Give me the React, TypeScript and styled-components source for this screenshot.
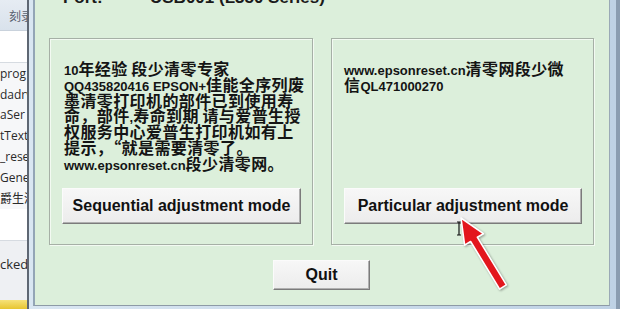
import React from "react";
import styled, { createGlobalStyle } from "styled-components";

const Global = createGlobalStyle`
  html, body { margin: 0; padding: 0; overflow: hidden; background: #ffffff; }
  #root { width: 620px; height: 309px; }
`;

const Screen = styled.div`
  position: relative;
  display: flex;
  width: 620px;
  height: 309px;
  overflow: hidden;
  font-family: "Liberation Sans", Arial, sans-serif;
`;

/* ---------- background explorer pane ---------- */
const Explorer = styled.div`
  width: 27px;
  flex: none;
  display: flex;
  flex-direction: column;
  background: #f7f8fa;
  overflow: hidden;
  font-family: "Open Sans", "Noto Sans CJK SC", sans-serif;
  font-size: 12px;
  color: #2a2a2a;
`;

const ExplorerHeader = styled.div`
  height: 30px;
  flex: none;
  display: flex;
  align-items: center;
  padding-left: 9px;
  background: linear-gradient(#e6ecf3, #d9e2ec);
  border-bottom: 1px solid #c9d2dc;
  color: #5a6270;
  white-space: nowrap;
  font-family: "Noto Sans CJK SC", sans-serif;
`;

const ExplorerGap = styled.div<{ $h: number }>`
  height: ${(p) => p.$h}px;
  flex: none;
  background: #ffffff;
`;

const ExplorerSep = styled.div`
  height: 1px;
  flex: none;
  background: #d6dbe1;
`;

const ExplorerRow = styled.div`
  height: 20.8px;
  flex: none;
  display: flex;
  align-items: center;
  white-space: nowrap;
  background: #f6f7f9;
`;

const ExplorerFooter = styled.div`
  flex: 1;
  display: flex;
  flex-direction: column;
  background: #eef0f3;
`;

const FooterRow = styled.div`
  height: 44px;
  display: flex;
  align-items: center;
  padding-top: 1px;
  white-space: nowrap;
  font-size: 13px;
`;

const YellowBar = styled.div`
  margin-top: auto;
  height: 9px;
  background: linear-gradient(#f6e27a, #e7c531);
`;

/* ---------- window frame ---------- */
const Window = styled.div`
  flex: 1;
  display: flex;
  flex-direction: column;
  border-left: 2px solid #5e6773;
  border-right: 4px solid #8b9db1;
  padding: 0 6px 3px 4px;
  background: linear-gradient(90deg, #d9e6f2, #bfd2e5);
`;

const Dialog = styled.div`
  flex: 1;
  display: flex;
  flex-direction: column;
  background: #dcefdb;
  border-left: 2px solid #93a5b6;
  border-right: 1px solid #9aa9b6;
  border-bottom: 1px solid #8d9aa6;
  padding: 0 15px 0 14px;
  overflow: hidden;
`;

const PortRow = styled.div`
  margin-top: -11px;
  height: 18px;
  display: flex;
  padding-left: 14px;
  font-size: 17px;
  line-height: 18px;
  font-weight: bold;
  color: #1a1a1a;
  white-space: nowrap;
`;

const PortLabel = styled.span`
  width: 87px;
  flex: none;
`;

const Groups = styled.div`
  margin-top: 31px;
  display: grid;
  grid-template-columns: 264px 263px;
  column-gap: 18px;
  height: 207px;
`;

const GroupBox = styled.div`
  display: flex;
  flex-direction: column;
  border: 1px solid #a6b0a6;
  box-shadow: inset 1px 1px 0 #f3faf2, 1px 1px 0 #f3faf2;
  padding: 22px 11px 20px 12px;
`;

const Notice = styled.div<{ $indent: number }>`
  padding-left: ${(p) => p.$indent}px;
  font-weight: bold;
  color: #141414;
  line-height: 15.8px;
`;

const Line = styled.div`
  white-space: nowrap;
  height: 15.8px;
`;

const Latin = styled.span`
  display: inline-block;
  white-space: pre;
  line-height: 15.8px;
  font-family: "Liberation Sans", Arial, sans-serif;
  font-size: 13px;
`;

const Cjk = styled.span`
  display: inline-block;
  white-space: pre;
  line-height: 15.8px;
  font-family: "Noto Sans CJK SC", sans-serif;
  font-size: 16px;
  letter-spacing: 0.4px;
`;

const ModeButton = styled.button`
  margin-top: auto;
  height: 36px;
  width: 100%;
  background: linear-gradient(#f7f7f7, #ececec);
  border: 1px solid;
  border-color: #fbfbfb #7b7b7b #7b7b7b #fbfbfb;
  box-shadow: inset -1px -1px 0 #b0b0b0;
  font-family: "Liberation Sans", Arial, sans-serif;
  font-weight: bold;
  font-size: 16px;
  color: #111;
  padding: 0;
`;

const QuitRow = styled.div`
  margin-top: 15px;
  display: flex;
  justify-content: center;
`;

const QuitButton = styled(ModeButton)`
  margin-top: 0;
  width: 97px;
  height: 30px;
`;

const Overlay = styled.svg`
  position: absolute;
  left: 0;
  top: 0;
  width: 620px;
  height: 309px;
  pointer-events: none;
`;

const CJK_RE = /([\u3000-\u303f\u4e00-\u9fff\uff00-\uffef\u201c\u201d]+)/;

function Mixed({ text }: { text: string }) {
  const parts = text.split(CJK_RE).filter((s) => s.length > 0);
  return (
    <Line>
      {parts.map((p, i) =>
        CJK_RE.test(p) ? <Cjk key={i}>{p}</Cjk> : <Latin key={i}>{p}</Latin>
      )}
    </Line>
  );
}

const leftLines = [
  "10年经验 段少清零专家",
  "QQ435820416 EPSON+佳能全序列废",
  "墨清零打印机的部件已到使用寿",
  "命，部件,寿命到期 请与爱普生授",
  "权服务中心爱普生打印机如有上",
  "提示，“就是需要清零了。",
  "www.epsonreset.cn段少清零网。",
];

const rightLines = ["www.epsonreset.cn清零网段少微", "信QL471000270"];

const explorerRows = ["prog", "dadrv", "aSer", "tText", "_rese", "Gene", "爵生清"];

export default function App() {
  return (
    <>
      <Global />
      <Screen>
        <Explorer>
          <ExplorerHeader>刻录</ExplorerHeader>
          <ExplorerGap $h={31} />
          <ExplorerSep />
          {explorerRows.map((r) => (
            <ExplorerRow key={r}>{r}</ExplorerRow>
          ))}
          <ExplorerGap $h={31} />
          <ExplorerSep />
          <ExplorerFooter>
            <FooterRow>cked</FooterRow>
            <YellowBar />
          </ExplorerFooter>
        </Explorer>
        <Window>
          <Dialog>
            <PortRow>
              <PortLabel>Port:</PortLabel>
              <span>USB001 (L350 Series)</span>
            </PortRow>
            <Groups>
              <GroupBox>
                <Notice $indent={2}>
                  {leftLines.map((l) => (
                    <Mixed key={l} text={l} />
                  ))}
                </Notice>
                <ModeButton>Sequential adjustment mode</ModeButton>
              </GroupBox>
              <GroupBox>
                <Notice $indent={0}>
                  {rightLines.map((l) => (
                    <Mixed key={l} text={l} />
                  ))}
                </Notice>
                <ModeButton>Particular adjustment mode</ModeButton>
              </GroupBox>
            </Groups>
            <QuitRow>
              <QuitButton>Quit</QuitButton>
            </QuitRow>
          </Dialog>
        </Window>
        <Overlay viewBox="0 0 620 309">
          <path
            d="M457 222 h4 M459 222 v13 M457 235 h4"
            stroke="#111"
            strokeWidth="1.2"
            fill="none"
          />
          <polygon
            points="461,218 483.4,233.7 477.4,237.3 506.4,284.9 499.6,289.1 470.6,241.5 464.6,245.1"
            fill="#e3161d"
            stroke="#ffffff"
            strokeWidth="1.6"
            strokeLinejoin="round"
            style={{ filter: "drop-shadow(1px 1px 1px rgba(0,0,0,0.35))" }}
          />
        </Overlay>
      </Screen>
    </>
  );
}
